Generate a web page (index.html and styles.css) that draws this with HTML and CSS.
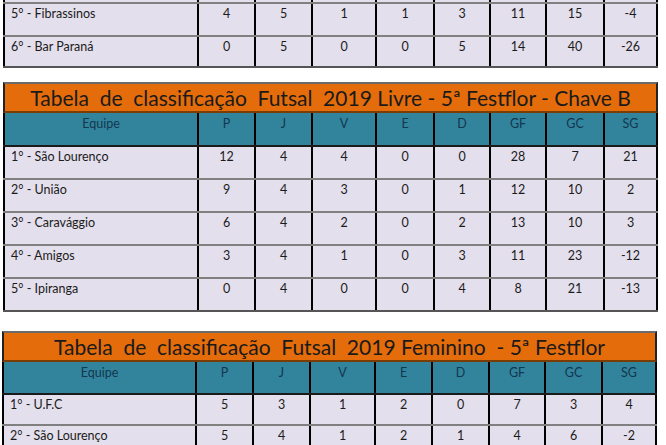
FILE: index.html
```html
<!DOCTYPE html>
<html lang="pt">
<head>
<meta charset="utf-8">
<link rel="stylesheet" href="styles.css">
</head>
<body>
<div class="page">
  <section class="tbl tbl-a tbl-cut">
    <div class="row row-stub"><div></div><div></div><div></div><div></div><div></div><div></div><div></div><div></div><div></div></div>
    <div class="row"><div class="team">5° - Fibrassinos</div><div>4</div><div>5</div><div>1</div><div>1</div><div>3</div><div>11</div><div>15</div><div>-4</div></div>
    <div class="row row-last row-short"><div class="team">6° - Bar Paraná</div><div>0</div><div>5</div><div>0</div><div>0</div><div>5</div><div>14</div><div>40</div><div>-26</div></div>
  </section>

  <section class="tbl tbl-a tbl-mid">
    <div class="title">Tabela  de  classificação  Futsal  2019 Livre - 5ª Festflor - Chave B</div>
    <div class="row head"><div>Equipe</div><div>P</div><div>J</div><div>V</div><div>E</div><div>D</div><div>GF</div><div>GC</div><div>SG</div></div>
    <div class="row"><div class="team">1° - São Lourenço</div><div>12</div><div>4</div><div>4</div><div>0</div><div>0</div><div>28</div><div>7</div><div>21</div></div>
    <div class="row"><div class="team">2° - União</div><div>9</div><div>4</div><div>3</div><div>0</div><div>1</div><div>12</div><div>10</div><div>2</div></div>
    <div class="row"><div class="team">3° - Caravággio</div><div>6</div><div>4</div><div>2</div><div>0</div><div>2</div><div>13</div><div>10</div><div>3</div></div>
    <div class="row"><div class="team">4° - Amigos</div><div>3</div><div>4</div><div>1</div><div>0</div><div>3</div><div>11</div><div>23</div><div>-12</div></div>
    <div class="row row-last"><div class="team">5° - Ipiranga</div><div>0</div><div>4</div><div>0</div><div>0</div><div>4</div><div>8</div><div>21</div><div>-13</div></div>
  </section>

  <section class="tbl tbl-b">
    <div class="title">Tabela  de  classificação  Futsal  2019 Feminino  - 5ª Festflor</div>
    <div class="row head"><div>Equipe</div><div>P</div><div>J</div><div>V</div><div>E</div><div>D</div><div>GF</div><div>GC</div><div>SG</div></div>
    <div class="row row-short"><div class="team">1° - U.F.C</div><div>5</div><div>3</div><div>1</div><div>2</div><div>0</div><div>7</div><div>3</div><div>4</div></div>
    <div class="row row-short"><div class="team">2° - São Lourenço</div><div>5</div><div>4</div><div>1</div><div>2</div><div>1</div><div>4</div><div>6</div><div>-2</div></div>
  </section>
</div>
</body>
</html>
```

FILE: styles.css
```css
html, body {
  margin: 0;
  padding: 0;
  background: #ffffff;
}

body {
  font-family: Lato, "Open Sans", sans-serif;
  color: #1b1b1b;
  width: 666px;
  height: 445px;
  overflow: hidden;
}

.page {
  display: flex;
  flex-direction: column;
}

.tbl {
  width: 655px;
  display: flex;
  flex-direction: column;
}

.tbl-a {
  margin-left: 3px;
}

.tbl-mid {
  margin-top: 14px;
}

.tbl-b {
  margin-left: 2px;
  margin-top: 19px;
}

.row {
  display: grid;
  column-gap: 2px;
  padding: 0 2px;
  background: #000;
  border-bottom: 2px solid #808080;
  height: 31px;
}

.row-short {
  height: 29px;
}

.tbl-a .row {
  grid-template-columns: 192px 55px 55px 62px 56px 54px 54px 56px 51px;
}

.tbl-b .row {
  grid-template-columns: 191px 55px 55px 63px 55px 55px 54px 55px 52px;
}

.row > div {
  background: #e4dfec;
  text-align: center;
  font-size: 12.5px;
  line-height: 15px;
  padding-top: 2px;
}

.row > .team {
  text-align: left;
  padding-left: 6px;
}

.row-stub {
  height: 2px;
}

.row-stub > div {
  padding: 0;
}

.row-last {
  border-bottom-color: #555;
}

.title {
  background: #e46c0a;
  border-top: 2px solid #6b6b6b;
  border-left: 2px solid #222;
  border-right: 2px solid #222;
  border-bottom: 2px solid #7a3d06;
  height: 27px;
  font-size: 21px;
  line-height: 27px;
  text-align: center;
  white-space: pre;
  color: #1a1a1a;
}

.row.head {
  height: 32px;
  border-bottom: 2px solid #1a1a1a;
}

.tbl-b .row.head {
  height: 31px;
}

.row.head > div {
  background: #31849b;
  color: #143650;
  font-size: 12.5px;
  padding-top: 3px;
}
```
